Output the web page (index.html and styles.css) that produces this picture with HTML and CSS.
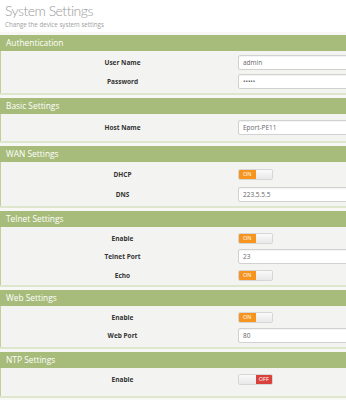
FILE: index.html
```html
<!DOCTYPE html>
<html lang="en">

<head>
    <meta charset="UTF-8">
    <title>System Settings</title>
    <link rel="stylesheet" href="styles.css">
</head>

<body>

<div class="page-head">
    <h1>System Settings</h1>
    <p>Change the device system settings</p>
</div>

<div class="panels">

    <!-- Authentication -->
    <div class="panel panel-auth">
        <div class="panel-title">Authentication</div>
        <div class="panel-body">
            <div class="row">
                <label>User Name</label>
                <input type="text" value="admin">
            </div>
            <div class="row">
                <label>Password</label>
                <input type="password" value="admin">
            </div>
        </div>
    </div>

    <!-- Basic -->
    <div class="panel panel-basic">
        <div class="panel-title">Basic Settings</div>
        <div class="panel-body">
            <div class="row">
                <label>Host Name</label>
                <input type="text" value="Eport-PE11">
            </div>
        </div>
    </div>

    <!-- WAN -->
    <div class="panel panel-wan">
        <div class="panel-title">WAN Settings</div>
        <div class="panel-body">
            <div class="row row-switch">
                <label>DHCP</label>
                <div class="switch on"><span class="on-part">ON</span><span class="knob"></span></div>
            </div>
            <div class="row">
                <label>DNS</label>
                <input type="text" value="223.5.5.5">
            </div>
        </div>
    </div>

    <!-- Telnet -->
    <div class="panel">
        <div class="panel-title">Telnet Settings</div>
        <div class="panel-body">
            <div class="row row-switch">
                <label>Enable</label>
                <div class="switch on"><span class="on-part">ON</span><span class="knob"></span></div>
            </div>
            <div class="row">
                <label>Telnet Port</label>
                <input type="text" value="23">
            </div>
            <div class="row row-switch">
                <label>Echo</label>
                <div class="switch on"><span class="on-part">ON</span><span class="knob"></span></div>
            </div>
        </div>
    </div>

    <!-- Web -->
    <div class="panel">
        <div class="panel-title">Web Settings</div>
        <div class="panel-body">
            <div class="row row-switch">
                <label>Enable</label>
                <div class="switch on"><span class="on-part">ON</span><span class="knob"></span></div>
            </div>
            <div class="row">
                <label>Web Port</label>
                <input type="text" value="80">
            </div>
        </div>
    </div>

    <!-- NTP -->
    <div class="panel panel-ntp">
        <div class="panel-title">NTP Settings</div>
        <div class="panel-body">
            <div class="row row-switch">
                <label>Enable</label>
                <div class="switch off"><span class="knob"></span><span class="off-part">OFF</span></div>
            </div>
        </div>
    </div>

</div>

</body>

</html>
```

FILE: styles.css
```css
* {
    box-sizing: border-box;
    font-family: 'Open Sans', 'DejaVu Sans', sans-serif;
}

body {
    margin: 0;
    padding: 0;
    background-color: #f7f8f6;
    width: 346px;
    overflow: hidden;
}

/* CABECERA */
.page-head {
    background-color: #ffffff;
    padding: 2px 5px 0;
    height: 32px;
}

.page-head h1 {
    margin: 0;
    font-family: 'Lato', 'Open Sans', sans-serif;
    font-size: 14px;
    line-height: 18px;
    font-weight: 300;
    letter-spacing: -0.5px;
    color: #999;
}

.page-head p {
    margin: 0;
    font-size: 6.2px;
    line-height: 9px;
    color: #a0a0a0;
}

/* PANELES */
.panels {
    width: 380px;
    padding-top: 3px;
}

.panel {
    margin-bottom: 3px;
    border-bottom: 2px solid #dfe6ce;
}

.panel-title {
    background-color: #a7bc7a;
    color: #ffffff;
    font-size: 8.4px;
    line-height: 16px;
    height: 16px;
    padding-left: 6px;
}

.panel-body {
    background-color: #f3f4f2;
    border-left: 1px solid #bfcf9a;
    padding: 5px 0 4px;
    display: flex;
    flex-direction: column;
    gap: 5px;
}

.panel-auth .panel-body {
    padding: 4px 0 4px;
    gap: 4px;
}

.panel-basic .panel-body {
    padding: 6px 0 6px;
}

.panel-wan .panel-body {
    padding-top: 6px;
    gap: 7px;
}

.panel-ntp .panel-body {
    padding-bottom: 11px;
}

.row {
    display: grid;
    grid-template-columns: 237px 1fr;
    align-items: center;
    height: 15px;
}

.row-switch {
    height: 12px;
}

label {
    padding-left: 6px;
    text-align: center;
    font-size: 6.5px;
    font-weight: bold;
    color: #333;
}

input[type="text"],
input[type="password"] {
    width: 130px;
    height: 15px;
    padding: 0 4px;
    border: 1px solid #cfd2cf;
    border-radius: 2px;
    background-color: #ffffff;
    box-shadow: inset 0 1px 1px rgba(0, 0, 0, 0.05);
    font-size: 6.5px;
    color: #666;
    outline: none;
}

/* INTERRUPTORES */
.switch {
    display: flex;
    width: 35px;
    height: 11px;
    border: 1px solid #d6d6d6;
    border-radius: 2px;
    overflow: hidden;
    background-color: #f0f0f0;
}

.switch span {
    flex: 1;
    font-size: 5.5px;
    line-height: 9px;
    text-align: center;
    color: #ffffff;
}

.on-part {
    background-color: #f7941e;
}

.off-part {
    background-color: #d9413c;
}

.knob {
    background: linear-gradient(#fafafa, #e8e8e8);
}
```
